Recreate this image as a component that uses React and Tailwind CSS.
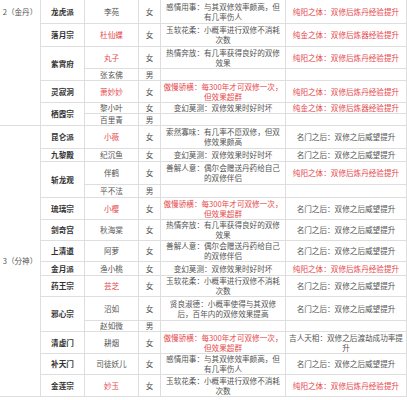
import React from "react";

// 双修对象一览（截图局部）
const RED = "text-[#e5484d]";

const SECTIONS = [
  {
    level: "2（金丹）",
    top: true,
    rows: [
      { sect: "龙虎派", span: 1, name: "李苑", g: "女", trait: "感情用事：与其双修效率颇高，但有几率伤人", body: "纯阳之体：双修后炼丹经验提升", bodyRed: true },
      { sect: "落月宗", span: 1, name: "杜仙蝶", nameRed: true, g: "女", trait: "玉软花柔：小概率进行双修不消耗次数", body: "纯金之体：双修后炼器经验提升", bodyRed: true },
      { sect: "紫霄府", span: 2, name: "丸子", nameRed: true, g: "女", trait: "热情奔放：有几率获得良好的双修效果", body: "纯阳之体：双修后炼丹经验提升", bodyRed: true },
      { name: "张玄佛", g: "男" },
      { sect: "灵寂洞", span: 1, name: "萧妙妙", nameRed: true, g: "女", trait: "傲慢骄横：每300年才可双修一次，但效果超群", traitRed: true, body: "纯阳之体：双修后炼丹经验提升", bodyRed: true },
      { sect: "栖霞宗", span: 2, name: "黎小叶", g: "女", trait: "变幻莫测：双修效果时好时坏", body: "纯金之体：双修后炼器经验提升", bodyRed: true },
      { name: "百里青", g: "男" },
    ],
  },
  {
    level: "3（分神）",
    rows: [
      { sect: "昆仑派", span: 1, name: "小薇", nameRed: true, g: "女", trait: "索然寡味：有几率不愿双修，但双修效果颇高", body: "名门之后：双修之后威望提升" },
      { sect: "九黎殿", span: 1, name: "纪沉鱼", g: "女", trait: "变幻莫测：双修效果时好时坏", body: "名门之后：双修之后威望提升" },
      { sect: "斩龙观", span: 2, name: "伴鹤", g: "女", trait: "善解人意：偶尔会赠送丹药给自己的双修伴侣", body: "纯阳之体：双修后炼丹经验提升", bodyRed: true },
      { name: "平不法", g: "男" },
      { sect: "琉璃宗", span: 1, name: "小樱", nameRed: true, g: "女", trait: "傲慢骄横：每300年才可双修一次，但效果超群", traitRed: true, body: "名门之后：双修之后威望提升" },
      { sect: "剑奇宫", span: 1, name: "秋海棠", g: "女", trait: "热情奔放：有几率获得良好的双修效果", body: "名门之后：双修之后威望提升" },
      { sect: "上清道", span: 1, name: "阿萝", g: "女", trait: "善解人意：偶尔会赠送丹药给自己的双修伴侣", body: "名门之后：双修之后威望提升" },
      { sect: "金月派", span: 1, name: "渔小桃", g: "女", trait: "变幻莫测：双修效果时好时坏", body: "纯阳之体：双修后炼丹经验提升", bodyRed: true },
      { sect: "药王宗", span: 1, name: "芸芝", nameRed: true, g: "女", trait: "玉软花柔：小概率进行双修不消耗次数", body: "名门之后：双修之后威望提升" },
      { sect: "邪心宗", span: 2, name: "沼如", g: "女", trait: "贤良淑德：小概率使得与其双修后，百年内的双修效果提高", body: "名门之后：双修之后威望提升" },
      { name: "赵如微", g: "男" },
      { sect: "清虚门", span: 1, name: "耕烟", g: "女", trait: "傲慢骄横：每300年才可双修一次，但效果超群", traitRed: true, body: "吉人天相：双修之后渡劫成功率提升" },
      { sect: "补天门", span: 1, name: "司徒妖儿", g: "女", trait: "感情用事：与其双修效率颇高，但有几率伤人", body: "名门之后：双修之后威望提升" },
      { sect: "金莲宗", span: 1, name: "妙玉", nameRed: true, g: "女", trait: "玉软花柔：小概率进行双修不消耗次数", body: "纯阳之体：双修后炼丹经验提升", bodyRed: true },
    ],
  },
];

const CELL = "flex items-center justify-center text-center border-b border-r border-[#dedede]";

export default function App() {
  return (
    <div className="w-[407px] h-[400px] overflow-hidden bg-white font-['Noto_Sans_CJK_SC','Noto_Sans',sans-serif] text-[7.6px] leading-[10px] text-[#555]">
      <div className="grid grid-cols-[41px_44px_54px_22px_125px_121px] grid-rows-[24px_23px_22px_12px_22px_11px_12px_23px_13px_23px_13px_22px_21px_21px_14px_21px_24px_11px_22px_21px_22px]">
        {SECTIONS.map((sec) => (
          <React.Fragment key={sec.level}>
            <div
              className={
                sec.top
                  ? "row-span-7 flex items-start justify-center pt-[7px] border-b border-r border-[#dedede]"
                  : "row-span-14 flex items-center justify-center border-b border-r border-[#dedede]"
              }
            >
              {sec.level}
            </div>
            {sec.rows.map((r, i) => (
              <React.Fragment key={i}>
                {r.sect && (
                  <div className={`${CELL} font-bold text-[#333] ${r.span === 2 ? "row-span-2" : ""}`}>{r.sect}</div>
                )}
                <div className={`${CELL} ${r.nameRed ? RED : ""}`}>{r.name}</div>
                <div className={CELL}>{r.g}</div>
                <div className={`${CELL} px-[2px] ${r.traitRed ? RED : ""}`}>{r.trait || ""}</div>
                <div className={`${CELL} px-[2px] ${r.bodyRed ? RED : ""}`}>{r.body || ""}</div>
              </React.Fragment>
            ))}
          </React.Fragment>
        ))}
      </div>
    </div>
  );
}
